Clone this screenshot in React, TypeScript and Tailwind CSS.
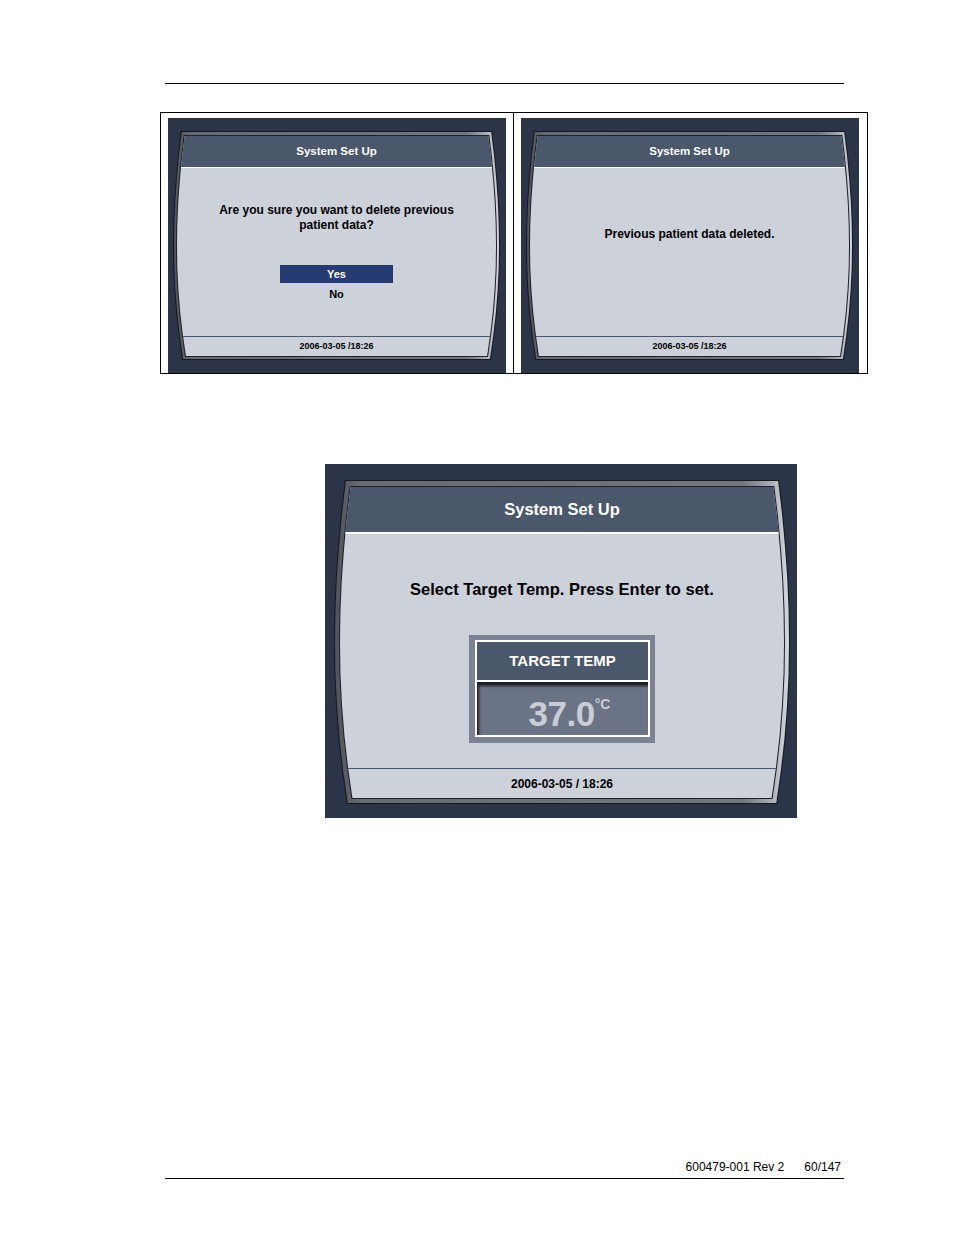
import type { ReactNode } from 'react'

// curved screen outline used by the bezel layers and the screen itself
const SHAPE =
  '[clip-path:polygon(2.4%_0%,97.6%_0%,98.45%_10%,99.1%_20%,99.6%_30%,99.9%_40%,100%_50%,99.9%_60%,99.55%_70%,99%_80%,98.2%_90%,97.2%_100%,2.8%_100%,1.8%_90%,1%_80%,0.45%_70%,0.1%_60%,0%_50%,0.1%_40%,0.4%_30%,0.9%_20%,1.55%_10%)]'

interface ScreenProps {
  size: 'sm' | 'lg'
  date: string
  children: ReactNode
}

function Screen({ size, date, children }: ScreenProps) {
  const lg = size === 'lg'
  return (
    <div
      className={
        lg
          ? 'w-[472px] h-[354px] pt-[16px] pb-[14px] pl-[9px] pr-[7px] bg-[#2c3448]'
          : 'w-[338px] h-[255px] pt-[13px] pb-[13px] pl-[5px] pr-[6px] bg-[#2c3448]'
      }
    >
      <div className={`h-full p-px bg-[#15181f] ${SHAPE}`}>
        <div
          className={`h-full bg-[linear-gradient(90deg,#505359_0%,#686b71_6%,#74777d_90%,#a9adb5_96%,#d4d8df_100%)] ${SHAPE} ${
            lg ? 'pt-[5px] px-[4px] pb-[4px]' : 'pt-[3px] px-[2px] pb-[2px]'
          }`}
        >
          <div className={`h-full p-px bg-[#1d2129] ${SHAPE}`}>
            <div className={`h-full flex flex-col bg-[#cdd1da] font-['Liberation_Sans',Arial,sans-serif] font-bold ${SHAPE}`}>
              <div
                className={
                  lg
                    ? 'h-[47px] shrink-0 border-b-2 border-white bg-[#4b576b] flex items-center justify-center text-white text-[16.5px]'
                    : 'h-[32px] shrink-0 border-b border-white bg-[#4b576b] flex items-center justify-center pt-px text-white text-[11.5px]'
                }
              >
                System Set Up
              </div>
              <div className="flex-1 flex flex-col items-center text-black">{children}</div>
              <div
                className={
                  lg
                    ? 'h-[30px] shrink-0 border-t border-[#4b576b] flex items-center justify-center text-black text-[12px]'
                    : 'h-[20px] shrink-0 border-t border-[#4b576b] flex items-center justify-center pt-px text-black text-[9px]'
                }
              >
                {date}
              </div>
            </div>
          </div>
        </div>
      </div>
    </div>
  )
}

export default function App() {
  return (
    <div className="w-[954px] h-[1235px] bg-white flex flex-col pl-[160px] pt-[83px] pb-[56px] font-['Liberation_Sans',Arial,sans-serif] text-black">
      {/* header rule */}
      <div className="ml-[5px] w-[679px] border-t border-black" />

      {/* two small screens */}
      <div className="mt-[28px] w-[708px] border border-black grid grid-cols-[352px_354px]">
        <div className="pl-[7px] pt-[5px]">
          <Screen size="sm" date="2006-03-05 /18:26">
            <p className="pt-[35px] text-[12px] leading-[15px] text-center">
              Are you sure you want to delete previous
              <br />
              patient data?
            </p>
            <div className="mt-[32px] w-[113px] h-[18px] bg-[#243a70] text-white text-[11px] flex items-center justify-center">
              Yes
            </div>
            <div className="h-[22px] text-[11px] flex items-center justify-center">No</div>
          </Screen>
        </div>
        <div className="border-l border-black pl-[7px] pt-[5px]">
          <Screen size="sm" date="2006-03-05 /18:26">
            <p className="pt-[59px] text-[12px] leading-[15px] text-center">Previous patient data deleted.</p>
          </Screen>
        </div>
      </div>

      {/* large screen */}
      <div className="mt-[90px] ml-[165px]">
        <Screen size="lg" date="2006-03-05 / 18:26">
          <p className="pt-[45px] text-[16.5px] leading-[20px] text-center">Select Target Temp. Press Enter to set.</p>
          <div className="mt-[36px] w-[186px] h-[108px] bg-[#7a8293] pt-[5px] pl-[6px] pr-[5px] pb-[6px] flex flex-col">
            <div className="h-[42px] shrink-0 border-2 border-white bg-[#4b576b] flex items-center justify-center text-white text-[15px]">
              TARGET TEMP
            </div>
            <div className="flex-1 border-2 border-t-0 border-white bg-[#6b7386] shadow-[inset_2px_4px_3px_rgba(0,0,0,0.75)] flex items-center justify-center pt-[10px] pl-[14px] text-[#c9cdd6]">
              <span className="text-[35px] leading-none tracking-[-0.5px]">37.0</span>
              <span className="self-start mt-[5px] text-[14px] leading-none">°C</span>
            </div>
          </div>
        </Screen>
      </div>

      {/* page footer */}
      <div className="mt-auto ml-[5px] w-[679px]">
        <div className="flex justify-end gap-[20px] pr-[3px] text-[12px] leading-[14px]">
          <span>600479-001 Rev 2</span>
          <span>60/147</span>
        </div>
        <div className="mt-[4px] border-t border-black" />
      </div>
    </div>
  )
}
